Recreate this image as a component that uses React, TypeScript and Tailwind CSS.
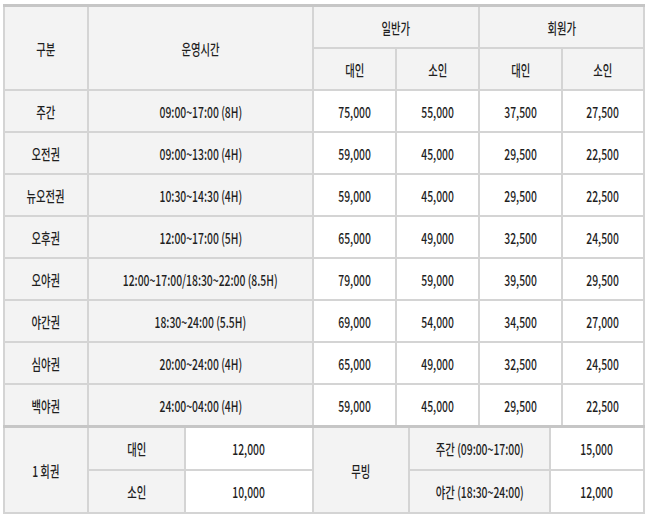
import React from "react";

const font = { fontFamily: '"Noto Sans CJK KR", "Noto Sans", sans-serif' };

function T({ children }: { children: React.ReactNode }) {
  return (
    <span className="inline-block whitespace-nowrap scale-x-[0.69] text-[15px] font-medium leading-none text-[#1f1f1f]">
      {children}
    </span>
  );
}

function G({ children, className = "" }: { children?: React.ReactNode; className?: string }) {
  return (
    <div className={`flex items-center justify-center bg-[#f3f3f3] ${className}`}>
      {children}
    </div>
  );
}
function W({ children, className = "" }: { children?: React.ReactNode; className?: string }) {
  return (
    <div className={`flex items-center justify-center bg-white ${className}`}>
      {children}
    </div>
  );
}

const rows: [string, string, string, string, string, string][] = [
  ["주간", "09:00~17:00 (8H)", "75,000", "55,000", "37,500", "27,500"],
  ["오전권", "09:00~13:00 (4H)", "59,000", "45,000", "29,500", "22,500"],
  ["뉴오전권", "10:30~14:30 (4H)", "59,000", "45,000", "29,500", "22,500"],
  ["오후권", "12:00~17:00 (5H)", "65,000", "49,000", "32,500", "24,500"],
  ["오야권", "12:00~17:00/18:30~22:00 (8.5H)", "79,000", "59,000", "39,500", "29,500"],
  ["야간권", "18:30~24:00 (5.5H)", "69,000", "54,000", "34,500", "27,000"],
  ["심야권", "20:00~24:00 (4H)", "65,000", "49,000", "32,500", "24,500"],
  ["백야권", "24:00~04:00 (4H)", "59,000", "45,000", "29,500", "22,500"],
];

export default function App() {
  return (
    <div className="w-[650px] h-[525px] bg-white pt-[4px] pl-[3px]" style={font}>
      <div className="w-[642px]">
        <div className="grid grid-cols-[82px_223px_81px_81px_81px_80px] auto-rows-[40px] gap-[2px] bg-[#d4d4d4] border-t-[3px] border-[#c6c6c6] px-[2px]">
          <G className="row-span-2"><T>구분</T></G>
          <G className="row-span-2"><T>운영시간</T></G>
          <G className="col-span-2"><T>일반가</T></G>
          <G className="col-span-2"><T>회원가</T></G>
          <G><T>대인</T></G>
          <G><T>소인</T></G>
          <G><T>대인</T></G>
          <G><T>소인</T></G>
          {rows.map((r) => (
            <React.Fragment key={r[0]}>
              <G><T>{r[0]}</T></G>
              <G><T>{r[1]}</T></G>
              <W><T>{r[2]}</T></W>
              <W><T>{r[3]}</T></W>
              <W><T>{r[4]}</T></W>
              <W><T>{r[5]}</T></W>
            </React.Fragment>
          ))}
        </div>
        <div className="grid grid-cols-[82px_95px_126px_94px_139px_92px] auto-rows-[41px] gap-[2px] bg-[#d4d4d4] border-t-[3px] border-[#c6c6c6] px-[2px] pb-[2px]">
          <G className="row-span-2"><T>1 회권</T></G>
          <G><T>대인</T></G>
          <W><T>12,000</T></W>
          <G className="row-span-2"><T>무빙</T></G>
          <G><T>주간 (09:00~17:00)</T></G>
          <W><T>15,000</T></W>
          <G><T>소인</T></G>
          <W><T>10,000</T></W>
          <G><T>야간 (18:30~24:00)</T></G>
          <W><T>12,000</T></W>
        </div>
      </div>
    </div>
  );
}
